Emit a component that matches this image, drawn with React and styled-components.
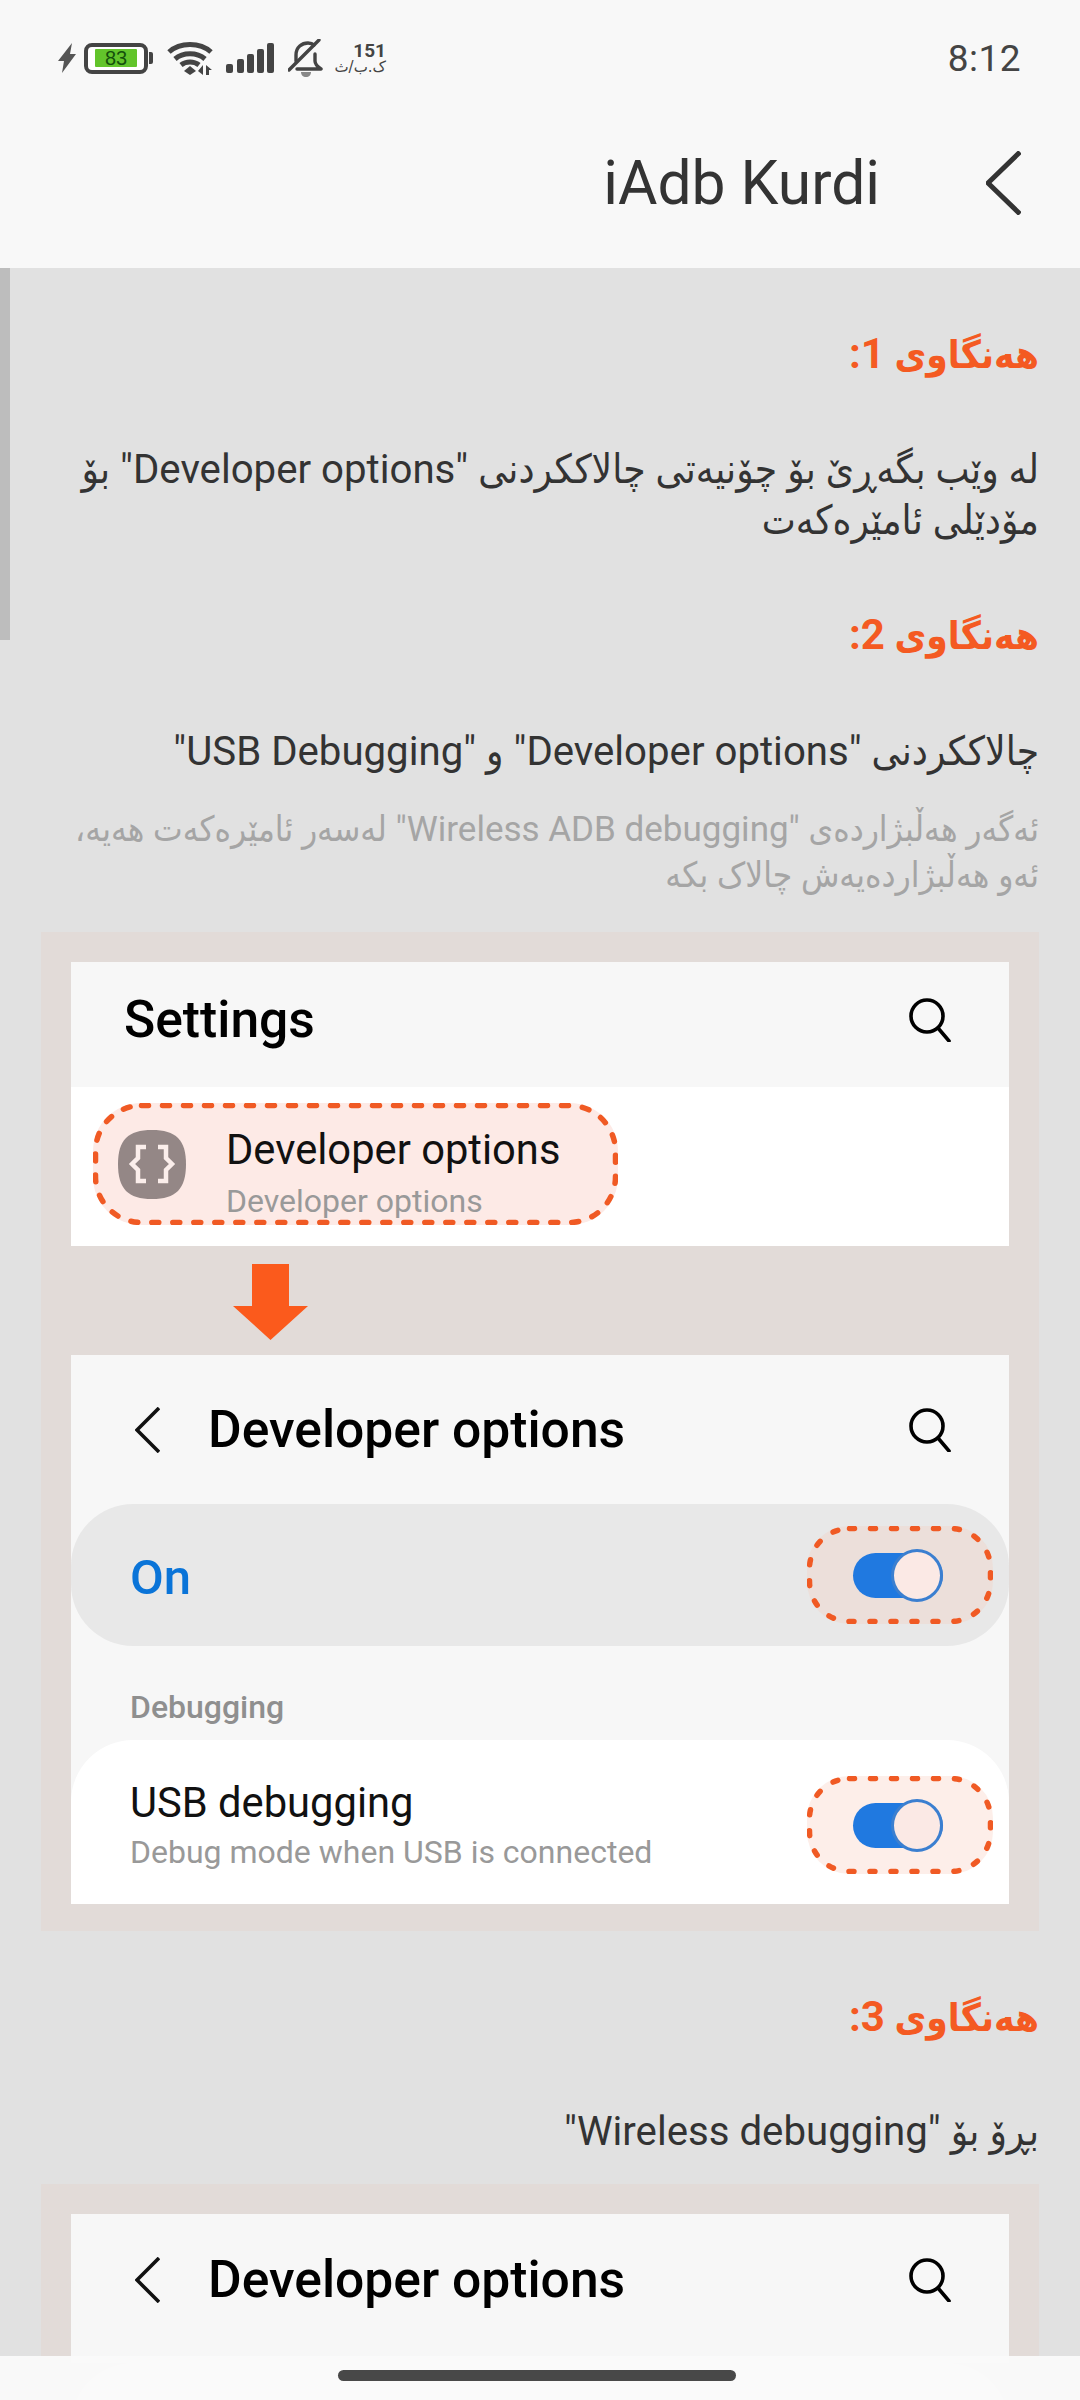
import React from 'react';
import styled, { createGlobalStyle } from 'styled-components';

const GlobalStyle = createGlobalStyle`
  html, body { margin: 0; padding: 0; background: #e1e1e1; }
  body { font-family: Roboto, "DejaVu Sans Condensed", "DejaVu Sans", sans-serif; }
`;

const Page = styled.div`
  position: relative;
  width: 1080px;
  height: 2400px;
  overflow: hidden;
  background: #e1e1e1;
`;

const Top = styled.header`
  height: 268px;
  background: #f8f8f8;
  box-sizing: border-box;
  padding: 39px 59px 0 58px;
`;

const StatusBar = styled.div`
  display: flex;
  align-items: center;
  justify-content: space-between;
  height: 38px;
`;

const StatusIcons = styled.div`
  display: flex;
  align-items: center;
`;

const Time = styled.span`
  font-size: 37px;
  color: #444;
  letter-spacing: 0.5px;
`;

const Battery = styled.div`
  display: flex;
  align-items: center;
  justify-content: center;
  box-sizing: border-box;
  width: 64px;
  height: 31px;
  margin: 0 1px 0 8px;
  border: 4px solid #444;
  border-radius: 8px;
  background: #fff;
`;

const BatteryFill = styled.span`
  width: 42px;
  height: 18px;
  background: #62c42b;
  color: #14500c;
  font: 20px/18px "Liberation Sans", sans-serif;
  text-align: center;
  border-radius: 1px;
`;

const BatteryNub = styled.span`
  width: 4px;
  height: 12px;
  background: #444;
  border-radius: 0 2px 2px 0;
`;

const Speed = styled.div`
  display: flex;
  flex-direction: column;
  align-items: flex-end;
  width: 52px;
  margin-left: 11px;
  color: #444;
`;

const SpeedValue = styled.span`
  font-size: 19px;
  line-height: 17px;
  font-weight: 700;
`;

const SpeedUnit = styled.span`
  font-family: "DejaVu Sans", sans-serif;
  font-size: 15px;
  line-height: 16px;
  white-space: nowrap;
`;

const TitleBar = styled.div`
  display: flex;
  align-items: center;
  justify-content: flex-end;
  margin-top: 66px;
  height: 80px;
`;

const Title = styled.h1`
  margin: 0 106px 0 0;
  font-size: 60.5px;
  font-weight: 400;
  color: #333;
`;

const ScrollThumb = styled.div`
  position: absolute;
  left: 0;
  top: 268px;
  width: 10px;
  height: 372px;
  background: #bdbdbd;
`;

const Content = styled.main`
  direction: rtl;
`;

const TextBlock = styled.section`
  padding: 0 41px 0 60px;
`;

const StepTitle = styled.h2`
  margin: ${(p) => p.$top}px 0 0;
  font-size: 38.5px;
  line-height: 50px;
  font-weight: 700;
  color: #f45a22;
`;

const StepNumber = styled.span`
  font-size: 42px;
`;

const Body = styled.p`
  margin: ${(p) => p.$top}px 0 0;
  font-size: 40.2px;
  line-height: 51px;
  color: #333;
`;

const Hint = styled.p`
  margin: ${(p) => p.$top}px 0 0;
  font-size: 35px;
  line-height: 46px;
  color: #a5a5a5;
`;

const Panel = styled.section`
  direction: ltr;
  box-sizing: border-box;
  width: 998px;
  margin: ${(p) => p.$top}px 41px 0 0;
  padding: 30px 30px 27px 30px;
  background: #e2dbd8;
`;

const PhoneHead = styled.div`
  display: flex;
  align-items: center;
  box-sizing: border-box;
  height: ${(p) => p.$height}px;
  padding: ${(p) => (p.$back ? `0 58px ${p.$lift || 0}px 64px` : '0 58px 10px 53px')};
  background: #f7f7f7;
`;

const PhoneTitle = styled.h3`
  flex: 1;
  margin: ${(p) => (p.$back ? '0 0 0 48px' : '0')};
  font-size: 51.6px;
  font-weight: 500;
  color: #000;
`;

const SettingsRow = styled.div`
  height: 159px;
  box-sizing: border-box;
  padding: 16px 0 0 22px;
  background: #fff;
`;

const Marked = styled.div`
  position: relative;
  display: flex;
  align-items: center;
  justify-content: ${(p) => (p.$center ? 'center' : 'flex-start')};
  box-sizing: border-box;
  width: ${(p) => p.$w}px;
  height: ${(p) => p.$h}px;
  padding-left: ${(p) => p.$pad || 0}px;
  background: ${(p) => p.$bg};
  border-radius: ${(p) => p.$r}px;
`;

const Dashes = styled.svg`
  position: absolute;
  inset: 0;
`;

const AppIcon = styled.svg`
  flex: none;
  margin-right: 40px;
`;

const RowText = styled.div`
  display: flex;
  flex-direction: column;
  margin-top: ${(p) => p.$top || 0}px;
`;

const RowTitle = styled.span`
  font-size: 41.7px;
  line-height: 48px;
  color: #111;
`;

const RowSub = styled.span`
  font-size: 32px;
  line-height: 38px;
  margin-top: ${(p) => p.$top || 0}px;
  color: #999;
`;

const ArrowGap = styled.div`
  height: 109px;
  box-sizing: border-box;
  padding: 18px 0 0 162px;
`;

const MasterSwitch = styled.div`
  display: flex;
  align-items: center;
  justify-content: space-between;
  height: 142px;
  padding: 0 16px 0 59px;
  background: #e8e8e8;
  border-radius: 62px;
`;

const OnLabel = styled.span`
  margin-top: 5px;
  font-size: 49px;
  font-weight: 500;
  color: #0a74d8;
`;

const Group = styled.div`
  height: 94px;
  box-sizing: border-box;
  padding: 43px 0 0 59px;
  background: #f7f7f7;
  font-size: 32px;
  line-height: 36px;
  font-weight: 500;
  color: #8f8f8f;
`;

const UsbCard = styled.div`
  display: flex;
  align-items: center;
  justify-content: space-between;
  height: 164px;
  padding: 6px 16px 0 59px;
  box-sizing: border-box;
  background: #fff;
  border-radius: 62px 62px 0 0;
`;

const PanelBack = styled.div`
  background: #f7f7f7;
`;

const Track = styled.span`
  position: relative;
  display: block;
  width: 90px;
  height: 45px;
  margin-right: 4px;
  background: #2079e0;
  border-radius: 23px;
`;

const Thumb = styled.span`
  position: absolute;
  right: 0;
  top: -4px;
  box-sizing: border-box;
  width: 52px;
  height: 53px;
  border: 3px solid #3b7fd0;
  border-radius: 50%;
  background: #fbe9e5;
`;

const HomeBar = styled.div`
  position: absolute;
  left: 0;
  right: 0;
  bottom: 0;
  height: 44px;
  display: flex;
  justify-content: center;
  padding-top: 14px;
  padding-right: 6px;
  box-sizing: border-box;
  background: rgba(250, 250, 250, 0.97);
`;

const HomeHandle = styled.span`
  width: 398px;
  height: 11px;
  border-radius: 6px;
  background: #484848;
`;

const Bolt = () => (
  <svg width="18" height="30" viewBox="0 0 18 30">
    <path d="M14 0 0 18h6L4 30 18 11h-6z" fill="#555" />
  </svg>
);

const Wifi = () => (
  <svg width="46" height="34" viewBox="0 0 46 34" style={{ marginLeft: 14 }}>
    <g fill="none" stroke="#444" strokeWidth="5">
      <path d="M2 11C13 1 33 1 44 11" />
      <path d="M8 18c8-7 22-7 30 0" />
      <path d="M14 24c5-4 13-4 18 0" />
    </g>
    <path d="m17 30 6-5 6 5-6 4z" fill="#444" />
    <path d="M36 24v10l-5-4zM39 34V24l6 5h-3v5z" fill="#444" />
  </svg>
);

const Signal = () => (
  <svg width="48" height="30" viewBox="0 0 48 30" style={{ marginLeft: 13 }}>
    <g fill="#444">
      <rect x="0" y="21" width="7" height="9" rx="2" />
      <rect x="11" y="16" width="7" height="14" rx="2" />
      <rect x="21" y="11" width="7" height="19" rx="2" />
      <rect x="31" y="6" width="7" height="24" rx="2" />
      <rect x="41" y="0" width="7" height="30" rx="2" />
    </g>
  </svg>
);

const BellOff = () => (
  <svg width="35" height="38" viewBox="0 0 35 38" style={{ marginLeft: 14 }}>
    <g fill="none" stroke="#444" strokeWidth="3.4" strokeLinecap="round" strokeLinejoin="round">
      <path d="M8 22V16C8 8 14 4 20 4c3 0 5 1 6 2" />
      <path d="M27 15v7c0 4 3 6 6 8H9" />
      <path d="M31 1 1 31" />
    </g>
    <path d="M13 33h10c0 3-2 5-5 5s-5-2-5-5z" fill="#888" />
  </svg>
);

const Chevron = ({ w, h, sw, color }) => (
  <svg width={w} height={h} viewBox={`0 0 ${w} ${h}`}>
    <path d={`M${w - 1} 1 2 ${h / 2} ${w - 1} ${h - 1}`} fill="none" stroke={color} strokeWidth={sw} />
  </svg>
);

const Search = () => (
  <svg width="44" height="44" viewBox="0 0 44 44">
    <circle cx="20" cy="18" r="16" fill="none" stroke="#000" strokeWidth="3.6" />
    <path d="m31 30 11 13" stroke="#000" strokeWidth="3.6" strokeLinecap="round" />
  </svg>
);

const DashedEdge = ({ w, h, r, dash }) => (
  <Dashes width={w} height={h} viewBox={`0 0 ${w} ${h}`}>
    <rect
      x="2.5"
      y="2.5"
      width={w - 5}
      height={h - 5}
      rx={r}
      fill="none"
      stroke="#f05a24"
      strokeWidth="5.5"
      strokeLinecap="round"
      strokeDasharray={dash}
    />
  </Dashes>
);

const Toggle = ({ bg }) => (
  <Marked $w={186} $h={98} $r={42} $bg={bg} $center>
    <DashedEdge w={186} h={98} r={40} dash="5 16" />
    <Track>
      <Thumb />
    </Track>
  </Marked>
);

const DevHead = ({ lift }) => (
  <PhoneHead $height={149} $back $lift={lift}>
    <Chevron w={25} h={46} sw={3.6} color="#111" />
    <PhoneTitle $back>Developer options</PhoneTitle>
    <Search />
  </PhoneHead>
);

const App = () => {
  return (
    <Page>
      <GlobalStyle />
      <Top>
        <StatusBar>
          <StatusIcons>
            <Bolt />
            <Battery>
              <BatteryFill>83</BatteryFill>
            </Battery>
            <BatteryNub />
            <Wifi />
            <Signal />
            <BellOff />
            <Speed>
              <SpeedValue>151</SpeedValue>
              <SpeedUnit>ک.ب/ث</SpeedUnit>
            </Speed>
          </StatusIcons>
          <Time>8:12</Time>
        </StatusBar>
        <TitleBar>
          <Title>iAdb Kurdi</Title>
          <Chevron w={35} h={64} sw={5} color="#333" />
        </TitleBar>
      </Top>
      <ScrollThumb />

      <Content>
        <TextBlock>
          <StepTitle $top={61}>هەنگاوی <StepNumber>1:</StepNumber></StepTitle>
          <Body $top={64}>له وێب بگەڕێ بۆ چۆنیەتی چالاککردنی "Developer options" بۆ مۆدێلی ئامێرەکەت</Body>
          <StepTitle $top={64}>هەنگاوی <StepNumber>2:</StepNumber></StepTitle>
          <Body $top={65}>چالاککردنی "Developer options" و "USB Debugging"</Body>
          <Hint $top={30}>ئەگەر هەڵبژاردەی "Wireless ADB debugging" لەسەر ئامێرەکەت هەیە، ئەو هەڵبژاردەیەش چالاک بکە</Hint>
        </TextBlock>

        <Panel $top={33}>
          <PhoneHead $height={125}>
            <PhoneTitle>Settings</PhoneTitle>
            <Search />
          </PhoneHead>
          <SettingsRow>
            <Marked $w={525} $h={122} $r={48} $bg="#fdeae6" $pad={25}>
              <DashedEdge w={525} h={122} r={46} dash="7 14" />
              <AppIcon width="68" height="69" viewBox="0 0 68 69">
                <path d="M34 0c24 0 34 10 34 34 0 25-10 35-34 35S0 59 0 34C0 10 10 0 34 0z" fill="#948786" />
                <path
                  d="M28 17h-8v11l-6 6 6 6v11h8M40 17h8v11l6 6-6 6v11h-8"
                  fill="none"
                  stroke="#fbeeeb"
                  strokeWidth="4.5"
                />
              </AppIcon>
              <RowText $top={17}>
                <RowTitle>Developer options</RowTitle>
                <RowSub $top={8}>Developer options</RowSub>
              </RowText>
            </Marked>
          </SettingsRow>
          <ArrowGap>
            <svg width="75" height="76" viewBox="0 0 75 76">
              <path d="M19 0h37v42h19L37.500 76 0 42h19z" fill="#fb5a1c" />
            </svg>
          </ArrowGap>
          <DevHead />
          <PanelBack>
            <MasterSwitch>
              <OnLabel>On</OnLabel>
              <Toggle bg="#ecdfda" />
            </MasterSwitch>
            <Group>Debugging</Group>
            <UsbCard>
              <RowText>
                <RowTitle>USB debugging</RowTitle>
                <RowSub $top={6}>Debug mode when USB is connected</RowSub>
              </RowText>
              <Toggle bg="#fdeee9" />
            </UsbCard>
          </PanelBack>
        </Panel>

        <TextBlock>
          <StepTitle $top={61}>هەنگاوی <StepNumber>3:</StepNumber></StepTitle>
          <Body $top={63}>بڕۆ بۆ "Wireless debugging"</Body>
        </TextBlock>

        <Panel $top={27}>
          <DevHead lift={18} />
          <MasterSwitch />
        </Panel>
      </Content>

      <HomeBar>
        <HomeHandle />
      </HomeBar>
    </Page>
  );
};

export default App;
